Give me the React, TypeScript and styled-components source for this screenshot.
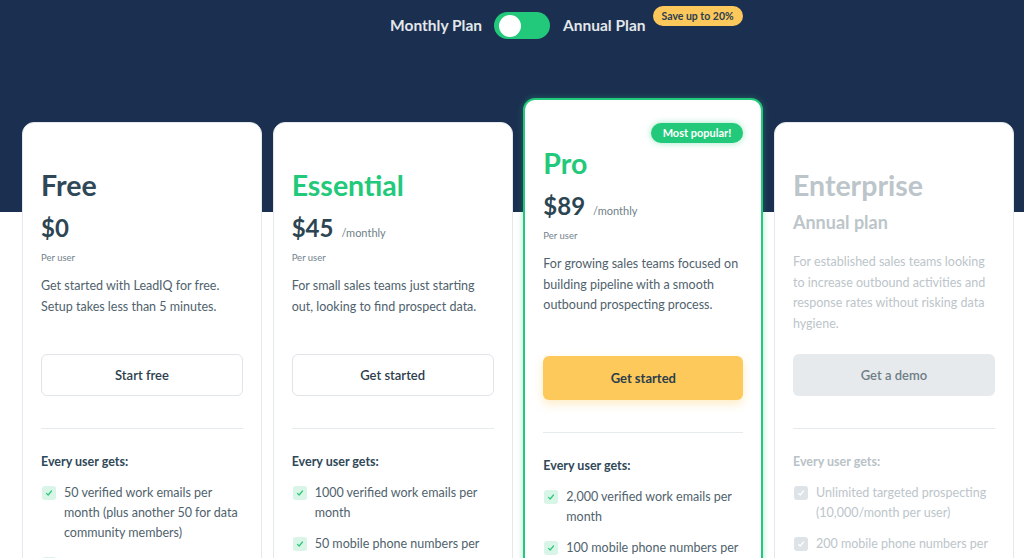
import React, {FC} from 'react';
import styled, {createGlobalStyle, css} from 'styled-components';

const GlobalStyle = createGlobalStyle`
  * {
    box-sizing: border-box;
  }
  body {
    margin: 0;
    background: #ffffff;
    font-family: 'Lato', 'Noto Sans', sans-serif;
  }
`;

interface PlanTypes {
  id: string;
  name: string;
  price?: string;
  period?: string;
  subtitle?: string;
  description: string;
  cta: string;
  variant: 'outline' | 'primary' | 'muted';
  accent?: boolean;
  featured?: boolean;
  muted?: boolean;
  features: string[];
}

const plans: PlanTypes[] = [
  {
    id: 'free',
    name: 'Free',
    price: '$0',
    description: 'Get started with LeadIQ for free. Setup takes less than 5 minutes.',
    cta: 'Start free',
    variant: 'outline',
    features: [
      '50 verified work emails per month (plus another 50 for data community members)',
      'Unlimited targeted prospecting',
    ],
  },
  {
    id: 'essential',
    name: 'Essential',
    price: '$45',
    period: '/monthly',
    description: 'For small sales teams just starting out, looking to find prospect data.',
    cta: 'Get started',
    variant: 'outline',
    accent: true,
    features: ['1000 verified work emails per month', '50 mobile phone numbers per month'],
  },
  {
    id: 'pro',
    name: 'Pro',
    price: '$89',
    period: '/monthly',
    description:
      'For growing sales teams focused on building pipeline with a smooth outbound prospecting process.',
    cta: 'Get started',
    variant: 'primary',
    accent: true,
    featured: true,
    features: ['2,000 verified work emails per month', '100 mobile phone numbers per month'],
  },
  {
    id: 'enterprise',
    name: 'Enterprise',
    subtitle: 'Annual plan',
    description:
      'For established sales teams looking to increase outbound activities and response rates without risking data hygiene.',
    cta: 'Get a demo',
    variant: 'muted',
    muted: true,
    features: [
      'Unlimited targeted prospecting (10,000/month per user)',
      '200 mobile phone numbers per month',
    ],
  },
];

const Page = styled.div`
  min-height: 558px;
  padding: 12px 10px 40px 22px;
  background: linear-gradient(to bottom, #1b3050 0, #1b3050 212px, #ffffff 212px);
`;

const TopBar = styled.div`
  display: grid;
  grid-template-columns: 1fr auto 1fr;
  align-items: center;
  column-gap: 12px;
  padding-left: 8px;
`;

const PlanLabel = styled.span`
  font-size: 15.5px;
  font-weight: 700;
  line-height: 27px;
  color: #e3e7eb;
`;

const LeftLabel = styled(PlanLabel)`
  justify-self: end;
`;

const RightGroup = styled.div`
  display: flex;
  align-items: flex-start;
  gap: 7px;
  padding-left: 1px;
`;

const Toggle = styled.div`
  display: flex;
  align-items: center;
  width: 56px;
  height: 27px;
  padding: 0 3px;
  border-radius: 14px;
  background: #22c97a;
`;

const Knob = styled.span`
  width: 22px;
  height: 22px;
  border-radius: 50%;
  background: #ffffff;
  margin-left: 2px;
`;

const SaveBadge = styled.span`
  position: relative;
  top: -6px;
  padding: 0 9px;
  height: 20px;
  line-height: 20px;
  border-radius: 10px;
  background: #fcc85b;
  color: #2b3d4f;
  font-size: 10.5px;
  font-weight: 700;
`;

const Cards = styled.div`
  display: grid;
  grid-template-columns: repeat(4, 240px);
  column-gap: 10.67px;
  align-items: start;
  margin-top: 59px;
`;

const Card = styled.div<{$featured?: boolean}>`
  display: flex;
  flex-direction: column;
  background: #ffffff;
  border: 1px solid #e2e8eb;
  border-radius: 12px;
  padding: 45px 18px 40px;
  margin-top: 24px;
  ${(p) =>
    p.$featured &&
    css`
      margin-top: 0;
      padding: 23px 18px 40px;
      border: 2px solid #22c97a;
      box-shadow: 0 0 6px rgba(34, 201, 122, 0.35);
    `}
`;

const Header = styled.div<{$featured?: boolean}>`
  display: flex;
  flex-direction: column;
  height: ${(p) => (p.$featured ? 233 : 186)}px;
`;

const PopularBadge = styled.span`
  align-self: flex-end;
  margin-bottom: 3px;
  height: 20px;
  line-height: 20px;
  padding: 0 12px;
  border-radius: 10px;
  background: #22c97a;
  color: #ffffff;
  font-size: 11px;
  font-weight: 700;
  box-shadow: 0 0 6px rgba(34, 201, 122, 0.45);
`;

const Title = styled.h2<{$accent?: boolean; $muted?: boolean}>`
  margin: 0;
  font-size: 28.5px;
  line-height: 34px;
  font-weight: 700;
  color: ${(p) => (p.$muted ? '#bcc5ca' : p.$accent ? '#22c97a' : '#2f4858')};
`;

const Subtitle = styled.div`
  margin-top: 8px;
  font-size: 18px;
  line-height: 24px;
  font-weight: 700;
  color: #bcc5ca;
`;

const PriceRow = styled.div`
  display: flex;
  align-items: baseline;
  gap: 8px;
  margin-top: 12px;
`;

const Price = styled.span`
  font-size: 24px;
  line-height: 28px;
  font-weight: 700;
  color: #2c4552;
`;

const Period = styled.span`
  font-size: 11px;
  color: #6f7f88;
`;

const PerUser = styled.div`
  margin-top: 9px;
  font-size: 9.5px;
  line-height: 14px;
  color: #73838c;
`;

const Description = styled.p<{$muted?: boolean}>`
  margin: ${(p) => (p.$muted ? 18 : 11)}px 0 0;
  font-size: 12.5px;
  line-height: 20.5px;
  color: ${(p) => (p.$muted ? '#bcc5ca' : '#4f626d')};
`;

const CtaButton = styled.button<{$variant: 'outline' | 'primary' | 'muted'}>`
  width: 100%;
  height: 42px;
  border-radius: 6px;
  font-family: inherit;
  font-size: 13px;
  font-weight: 600;
  color: #2c3e4c;
  cursor: pointer;
  border: 1px solid #dfe5e8;
  background: #ffffff;
  ${(p) =>
    p.$variant === 'primary' &&
    css`
      height: 44px;
      border: none;
      font-weight: 700;
      background: #fdc95a;
      box-shadow: 0 4px 10px rgba(253, 201, 90, 0.35);
    `}
  ${(p) =>
    p.$variant === 'muted' &&
    css`
      border: none;
      background: #e6eaed;
      color: #6f7e86;
    `}
`;

const Divider = styled.hr`
  margin: 32px 0 0;
  border: none;
  border-top: 1px solid #e5eaed;
`;

const ListTitle = styled.div<{$muted?: boolean}>`
  margin-top: 23px;
  font-size: 12.5px;
  line-height: 20px;
  font-weight: 700;
  color: ${(p) => (p.$muted ? '#b9c2c7' : '#2f4858')};
`;

const FeatureList = styled.ul`
  display: flex;
  flex-direction: column;
  gap: 11px;
  margin: 11px 0 0;
  padding: 0;
  list-style: none;
`;

const FeatureItem = styled.li<{$muted?: boolean}>`
  display: flex;
  align-items: flex-start;
  gap: 8px;
  font-size: 12.5px;
  line-height: 20px;
  color: ${(p) => (p.$muted ? '#bcc5ca' : '#4f626d')};
`;

const CheckBox = styled.span<{$muted?: boolean}>`
  flex: none;
  display: flex;
  align-items: center;
  justify-content: center;
  width: 14px;
  height: 14px;
  margin: 3px 0 0 1px;
  border-radius: 3px;
  background: ${(p) => (p.$muted ? '#dde3e6' : '#d8f5e7')};
  color: ${(p) => (p.$muted ? '#ffffff' : '#2ec77a')};
`;

const Check: FC = () => (
  <svg width="8" height="8" viewBox="0 0 8 8" fill="none">
    <path d="M1.5 4.3L3.2 6L6.5 2" stroke="currentColor" strokeWidth="1.2" strokeLinecap="round" strokeLinejoin="round" />
  </svg>
);

const PlanCard: FC<{plan: PlanTypes}> = ({plan}) => {
  return (
    <Card $featured={plan.featured}>
      <Header $featured={plan.featured}>
        {plan.featured && <PopularBadge>Most popular!</PopularBadge>}
        <Title $accent={plan.accent} $muted={plan.muted}>
          {plan.name}
        </Title>
        {plan.price ? (
          <>
            <PriceRow>
              <Price>{plan.price}</Price>
              {plan.period && <Period>{plan.period}</Period>}
            </PriceRow>
            <PerUser>Per user</PerUser>
          </>
        ) : (
          <Subtitle>{plan.subtitle}</Subtitle>
        )}
        <Description $muted={plan.muted}>{plan.description}</Description>
      </Header>
      <CtaButton $variant={plan.variant}>{plan.cta}</CtaButton>
      <Divider />
      <ListTitle $muted={plan.muted}>Every user gets:</ListTitle>
      <FeatureList>
        {plan.features.map((item, idx) => (
          <FeatureItem key={idx} $muted={plan.muted}>
            <CheckBox $muted={plan.muted}>
              <Check />
            </CheckBox>
            <span>{item}</span>
          </FeatureItem>
        ))}
      </FeatureList>
    </Card>
  );
};

const App: FC = () => {
  return (
    <>
      <GlobalStyle />
      <Page>
        <TopBar>
          <LeftLabel>Monthly Plan</LeftLabel>
          <Toggle>
            <Knob />
          </Toggle>
          <RightGroup>
            <PlanLabel>Annual Plan</PlanLabel>
            <SaveBadge>Save up to 20%</SaveBadge>
          </RightGroup>
        </TopBar>
        <Cards>
          {plans.map((plan) => (
            <PlanCard key={plan.id} plan={plan} />
          ))}
        </Cards>
      </Page>
    </>
  );
};

export default App;
